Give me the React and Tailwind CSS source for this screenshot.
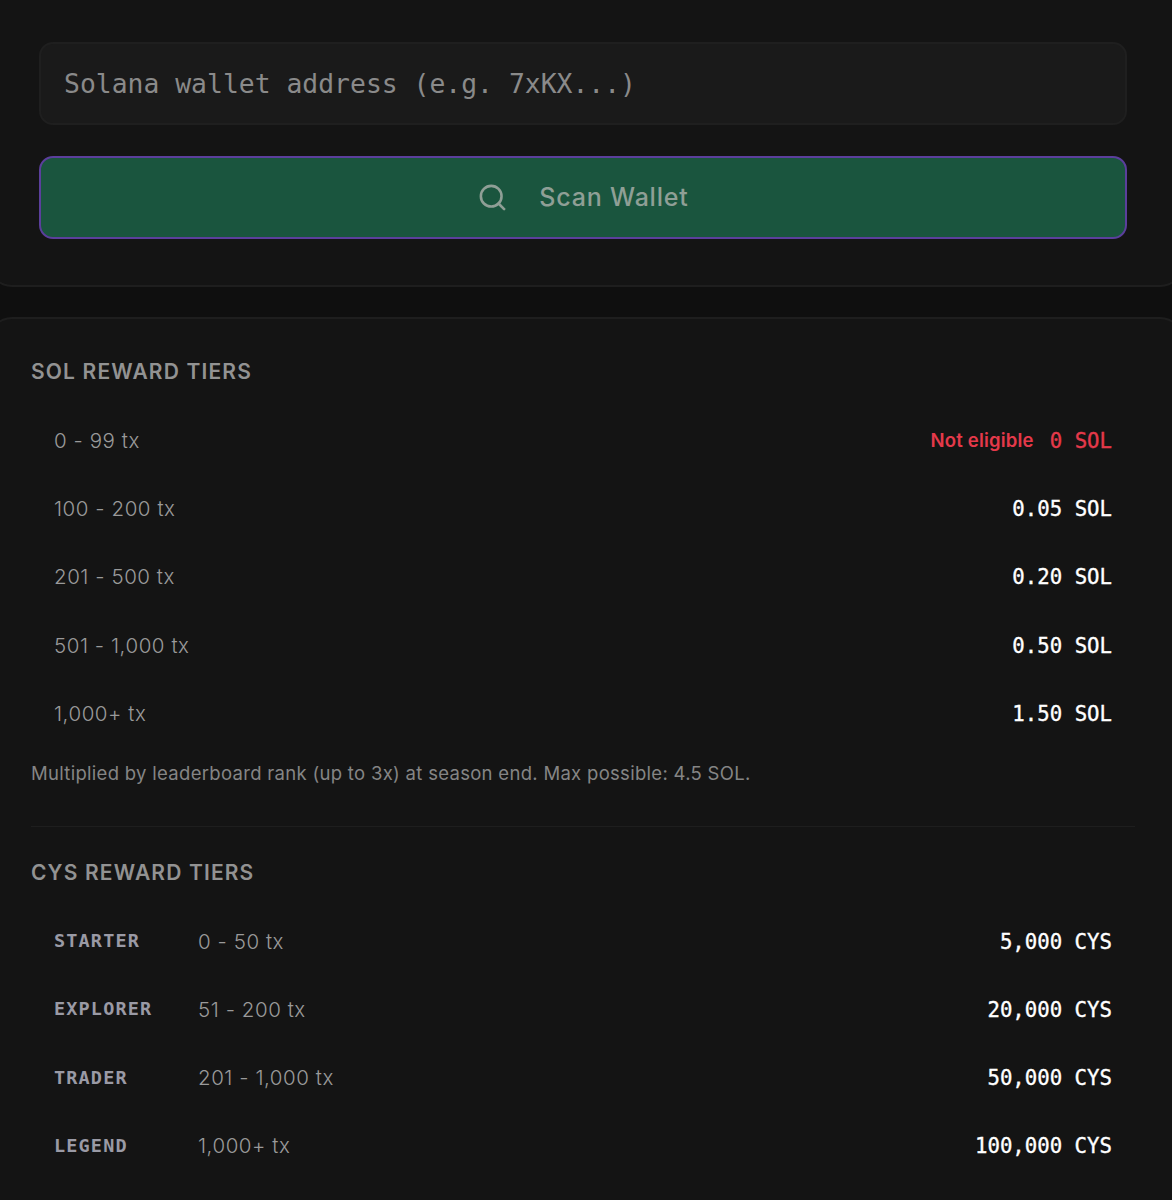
import React from 'react';
import { Search } from 'lucide-react';

const solTiers = [
  { range: '0 - 99 tx', reward: '0 SOL', none: true },
  { range: '100 - 200 tx', reward: '0.05 SOL' },
  { range: '201 - 500 tx', reward: '0.20 SOL' },
  { range: '501 - 1,000 tx', reward: '0.50 SOL' },
  { range: '1,000+ tx', reward: '1.50 SOL' },
];

const cysTiers = [
  { name: 'STARTER', range: '0 - 50 tx', reward: '5,000 CYS' },
  { name: 'EXPLORER', range: '51 - 200 tx', reward: '20,000 CYS' },
  { name: 'TRADER', range: '201 - 1,000 tx', reward: '50,000 CYS' },
  { name: 'LEGEND', range: '1,000+ tx', reward: '100,000 CYS' },
];

const sans = "font-['Inter',sans-serif]";
const mono = "font-['DejaVu_Sans_Mono',monospace]";

function Heading({ children }) {
  return <h3 className={`${sans} text-[21px] leading-[28px] font-semibold tracking-[1.15px] text-[#929292]`}>{children}</h3>;
}

function Reward({ children, red }) {
  return <span className={`${mono} text-[20.7px] font-normal [-webkit-text-stroke:0.35px] ${red ? 'text-[#e5394a]' : 'text-white'}`}>{children}</span>;
}

export default function App() {
  return (
    <div className="h-[1200px] overflow-hidden bg-[#0f0f0f]">
      {/* cards run a little past the viewport, only the curve of the corners shows */}
      <div className="-mx-[12px] flex flex-col gap-[31px] rounded-b-[24px] border-x-2 border-b-2 border-[#1e1e1e] bg-[#141414] pt-[42px] pr-[55px] pb-[46px] pl-[49px]">
        <input
          placeholder="Solana wallet address (e.g. 7xKX...)"
          className={`${mono} h-[83px] w-full rounded-[14px] border-2 border-[#1f1f1f] bg-[#1a1a1a] px-[23px] text-[26.4px] text-white outline-none placeholder:text-[#8a8a8a]`}
        />
        <button className="flex h-[83px] w-full items-center justify-center gap-[31px] rounded-[14px] border-2 border-[#5b3f9c] bg-[#1a553e] text-[#8f9f96]">
          <Search size={31} strokeWidth={2} />
          <span className={`${sans} pt-[1px] text-[25px] font-medium tracking-[0.8px]`}>Scan Wallet</span>
        </button>
      </div>

      <div className="-mx-[12px] mt-[30px] rounded-t-[24px] border-x-2 border-t-2 border-[#1e1e1e] bg-[#141414] pt-[39px] pr-[47px] pb-[60px] pl-[41px]">
        <Heading>SOL REWARD TIERS</Heading>
        <div className="mt-[21px]">
          {solTiers.map((t) => (
            <div key={t.range} className="flex h-[68.3px] items-center justify-between px-[23px]">
              <span className={`${sans} text-[20.5px] font-light tracking-[0.55px] text-[#9a9a9a]`}>{t.range}</span>
              <div className="flex items-center gap-[16px]">
                {t.none && <span className={`${sans} text-[18.5px] font-semibold tracking-[0.2px] text-[#e5394a]`}>Not eligible</span>}
                <Reward red={t.none}>{t.reward}</Reward>
              </div>
            </div>
          ))}
        </div>
        <p className={`${sans} mt-[10.5px] text-[18.5px] leading-[28px] font-normal tracking-[0.3px] text-[#858585]`}>
          Multiplied by leaderboard rank (up to 3x) at season end. Max possible: 4.5 SOL.
        </p>
        <div className="mt-[39px] mb-[32px] h-px bg-[#1e1e1e]" />
        <Heading>CYS REWARD TIERS</Heading>
        <div className="mt-[21px]">
          {cysTiers.map((t) => (
            <div key={t.name} className="flex h-[68.2px] items-center px-[23px]">
              <span className={`${mono} w-[144px] pb-[2px] text-[18.5px] font-bold tracking-[1.15px] text-[#9a9aa5]`}>{t.name}</span>
              <span className={`${sans} text-[20.5px] font-light tracking-[0.55px] text-[#9a9a9a]`}>{t.range}</span>
              <div className="ml-auto">
                <Reward>{t.reward}</Reward>
              </div>
            </div>
          ))}
        </div>
      </div>
    </div>
  );
}
